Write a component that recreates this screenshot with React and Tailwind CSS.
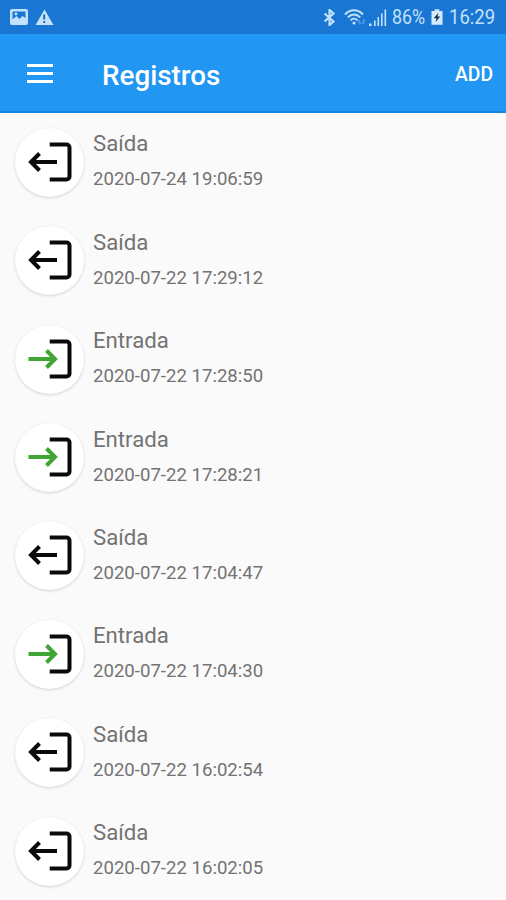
const records = [
  { id: 1, type: "Saída", date: "2020-07-24 19:06:59" },
  { id: 2, type: "Saída", date: "2020-07-22 17:29:12" },
  { id: 3, type: "Entrada", date: "2020-07-22 17:28:50" },
  { id: 4, type: "Entrada", date: "2020-07-22 17:28:21" },
  { id: 5, type: "Saída", date: "2020-07-22 17:04:47" },
  { id: 6, type: "Entrada", date: "2020-07-22 17:04:30" },
  { id: 7, type: "Saída", date: "2020-07-22 16:02:54" },
  { id: 8, type: "Saída", date: "2020-07-22 16:02:05" },
];

const StatusBar = () => (
  <div className="flex h-[34px] shrink-0 items-center bg-[#1976d2] pl-[10px] pr-[11px] text-[#c3e1fb]">
    <svg className="h-4 w-[18px]" viewBox="0 0 18 16">
      <path
        fill="currentColor"
        fillRule="evenodd"
        d="M2 0h14a2 2 0 0 1 2 2v12a2 2 0 0 1-2 2H2a2 2 0 0 1-2-2V2a2 2 0 0 1 2-2zM2.5 2.5v8l4-3.5 3 3 3-3 3 2V2.5h-13z"
      />
      <circle cx="6" cy="5" r="1.4" fill="currentColor" />
    </svg>
    <svg className="ml-[7px] h-4 w-[19px]" viewBox="0 0 19 16">
      <path d="M9.5 0.5L18.5 16H0.5z" fill="currentColor" />
      <path d="M9.2 5.5v5M9.2 12v2" stroke="#1e5eaa" strokeWidth="1.8" />
    </svg>

    <svg className="ml-auto h-[17px] w-[13px]" viewBox="0 0 13 19" fill="none" stroke="currentColor" strokeWidth="2.4">
      <path d="M1 5l10 9-4.5 4V1L11 5 1 14" />
    </svg>
    <svg className="ml-[8px] h-[19px] w-[22px]" viewBox="0 0 22 19" fill="none" stroke="currentColor" strokeWidth="1.9">
      <path d="M1 6.5C6 .8 14 .8 19 6.5M3.8 9.4c3.6-3.900 8.8-3.900 12.4 0M6.6 12.3c2-2.200 4.8-2.200 6.8 0" />
      <circle cx="10" cy="15" r="1.6" fill="currentColor" stroke="none" />
      <path d="M14.5 12l2 4.5M19 16l1.2-4.5" stroke="#4c9be8" strokeWidth="2" />
    </svg>
    <svg className="ml-[3px] h-[18px] w-[18px]" viewBox="0 0 18 18" fill="currentColor">
      <path d="M0 15.500h2.500V18H0zM5 12.500h1.600V18H5zM8.500 9h1.600v9H8.500zM12 5.500h1.600V18H12zM15.500 1.500h1.600V18h-1.600z" />
    </svg>
    <span className="ml-[5px] w-[36px] text-[21px] leading-none">
      <span className="inline-block origin-left scale-x-[.85]">86%</span>
    </span>
    <svg className="ml-[3px] mr-[2px] h-[16px] w-[12px]" viewBox="0 0 13 17">
      <path d="M4 0h5v2h3.500v15H.5V2H4z" fill="#d3ebff" />
      <path d="M8 4L3 9.800h3L5 14l5-6H7z" fill="#172c55" />
    </svg>
    <span className="ml-[4px] w-[46px] text-[21px] leading-none">
      <span className="inline-block origin-left scale-x-[.88]">16:29</span>
    </span>
  </div>
);

const AppBar = () => (
  <header className="flex h-[79px] shrink-0 items-center border-b-2 border-[#1b84dc] bg-[#2196f3] pl-[27px] pr-[13px] text-white">
    <button type="button" aria-label="Menu" className="mt-px flex w-[26px] flex-col gap-[5px]">
      <span className="h-[3px] w-full bg-current" />
      <span className="h-[3px] w-full bg-current" />
      <span className="h-[3px] w-full bg-current" />
    </button>
    <h1 className="ml-[49px] mt-[6px] text-[27.8px] font-medium leading-none">Registros</h1>
    <button type="button" className="ml-auto mt-[4px] text-[19.3px] font-medium leading-none">
      ADD
    </button>
  </header>
);

const RecordIcon = ({ type }) => (
  <div className="size-[69px] rounded-full bg-white shadow-[0_1px_3px_rgba(0,0,0,0.16)]">
    <svg className="size-full" viewBox="0 0 69 69" fill="none" strokeWidth="4">
      <path d="M34.7 16.5H51.500a3 3 0 0 1 3 3v29a3 3 0 0 1-3 3H34.700" stroke="#0a0a0a" />
      {type === "Entrada" ? (
        <path d="M13.5 34H41M31.5 25.5l8.5 8.5-8.5 8.5" stroke="#3fa535" />
      ) : (
        <path d="M42 34H15.5M24.5 25.5L16 34l8.5 8.5" stroke="#0a0a0a" />
      )}
    </svg>
  </div>
);

const RecordItem = ({ record }) => (
  <li className="flex h-[98.45px] items-center pl-[15px]">
    <RecordIcon type={record.type} />
    <div className="mb-1 ml-[9px] flex flex-col gap-4 text-[#737373]">
      <span className="text-[22.2px] leading-[22px]">{record.type}</span>
      <span className="text-[18.6px] leading-[18px]">{record.date}</span>
    </div>
  </li>
);

export default function App() {
  return (
    <div className="flex h-[900px] w-full flex-col overflow-hidden bg-[#fafafa] font-[Roboto,sans-serif]">
      <StatusBar />
      <AppBar />
      <ul>
        {records.map((record) => (
          <RecordItem key={record.id} record={record} />
        ))}
      </ul>
    </div>
  );
}
